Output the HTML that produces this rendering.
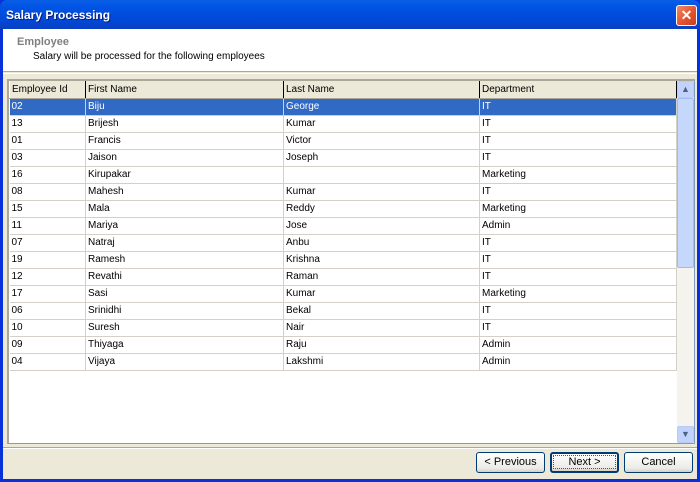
<!DOCTYPE html><html><head><style>
*{margin:0;padding:0;box-sizing:border-box}
body{width:700px;height:482px;overflow:hidden;font-family:Tahoma,"Liberation Sans",sans-serif;font-size:10px;background:#0831d9;position:relative}
.title{position:absolute;left:0;top:0;width:700px;height:29px;background:linear-gradient(#0a5fe6,#0055e5 20%,#0048d8 70%,#0a3fc0);border-radius:7px 7px 0 0}
.title span{position:absolute;left:6px;top:8px;color:#fff;font-weight:bold;font-size:12px;text-shadow:1px 1px #0a1f7a}
.close{position:absolute;left:676px;top:5px;width:21px;height:21px;background:linear-gradient(135deg,#f08a6a,#e0502a 60%,#c8401e);border:1px solid #fff;border-radius:3px;color:#fff;font:bold 14px "Liberation Sans",sans-serif;text-align:center;line-height:19px}
.client{position:absolute;left:3px;top:29px;width:694px;height:450px;background:#ece9d8}
.hdr{position:absolute;left:0;top:0;width:694px;height:43px;background:#fff;border-bottom:1px solid #aca899}
.hdr .t{position:absolute;left:14px;top:7px;color:#7f7f7f;font-weight:bold;font-size:11px}
.hdr .s{position:absolute;left:30px;top:22px;color:#000}
.sep2{position:absolute;left:0;top:44px;width:694px;height:1px;background:#fff}
.grid{position:absolute;left:4px;top:50px;width:688px;height:365px;background:#fff;border:1px solid #7f9db9;border-left:2px solid #aca899;border-top:2px solid #aca899}
table{border-collapse:collapse;position:absolute;left:0;top:0;width:668px}
td{height:17px;padding:0 2px;border-right:1px solid #d4d0c8;border-bottom:1px solid #d4d0c8;white-space:nowrap}
th{height:17px;font-weight:normal;text-align:left;padding:0 2px;background:#ece9d8;border-right:1px solid #000;border-bottom:1px solid #aca899;border-left:1px solid #fff}
tr.sel td{background:#316ac5;color:#fff}
.sb{position:absolute;right:0;top:0;width:17px;height:100%;background:#f4f3ee}
.sb .a{position:absolute;left:0;width:17px;height:17px;background:#c1d3fb;border:1px solid #b8cbf5;border-radius:2px;color:#4d6185;font-size:9px;text-align:center;line-height:15px}
.sb .th{position:absolute;left:0;top:17px;width:17px;height:170px;background:#c6d7fc;border:1px solid #a4b9ef;border-radius:2px}
.line{position:absolute;left:0;top:418px;width:694px;height:2px;border-top:1px solid #aca899;border-bottom:1px solid #fff}
.btn{position:absolute;top:423px;height:21px;width:69px;background:linear-gradient(#fff,#ecebe6 80%,#d6d0c5);border:1px solid #003c74;border-radius:3px;text-align:center;line-height:19px;color:#000;font-size:11px}
</style></head><body>
<div class="title"><span>Salary Processing</span><div class="close">✕</div></div>
<div class="client">
<div class="hdr"><div class="t">Employee</div><div class="s">Salary will be processed for the following employees</div></div>
<div class="sep2"></div>
<div class="grid">
<table>
<tr><th style="width:76px">Employee Id</th><th style="width:198px">First Name</th><th style="width:196px">Last Name</th><th>Department</th></tr>
<tr class="sel"><td>02</td><td>Biju</td><td>George</td><td>IT</td></tr>
<tr><td>13</td><td>Brijesh</td><td>Kumar</td><td>IT</td></tr>
<tr><td>01</td><td>Francis</td><td>Victor</td><td>IT</td></tr>
<tr><td>03</td><td>Jaison</td><td>Joseph</td><td>IT</td></tr>
<tr><td>16</td><td>Kirupakar</td><td></td><td>Marketing</td></tr>
<tr><td>08</td><td>Mahesh</td><td>Kumar</td><td>IT</td></tr>
<tr><td>15</td><td>Mala</td><td>Reddy</td><td>Marketing</td></tr>
<tr><td>11</td><td>Mariya</td><td>Jose</td><td>Admin</td></tr>
<tr><td>07</td><td>Natraj</td><td>Anbu</td><td>IT</td></tr>
<tr><td>19</td><td>Ramesh</td><td>Krishna</td><td>IT</td></tr>
<tr><td>12</td><td>Revathi</td><td>Raman</td><td>IT</td></tr>
<tr><td>17</td><td>Sasi</td><td>Kumar</td><td>Marketing</td></tr>
<tr><td>06</td><td>Srinidhi</td><td>Bekal</td><td>IT</td></tr>
<tr><td>10</td><td>Suresh</td><td>Nair</td><td>IT</td></tr>
<tr><td>09</td><td>Thiyaga</td><td>Raju</td><td>Admin</td></tr>
<tr><td>04</td><td>Vijaya</td><td>Lakshmi</td><td>Admin</td></tr>
</table>
<div class="sb"><div class="a" style="top:0">▲</div><div class="th"></div><div class="a" style="bottom:0">▼</div></div>
</div>
<div class="line"></div>
<div class="btn" style="left:473px">&lt; Previous</div>
<div class="btn" style="left:547px;border-width:2px;line-height:17px"><span style="outline:1px dotted #555;padding:0 14px">Next &gt;</span></div>
<div class="btn" style="left:621px">Cancel</div>
</div>
</body></html>
